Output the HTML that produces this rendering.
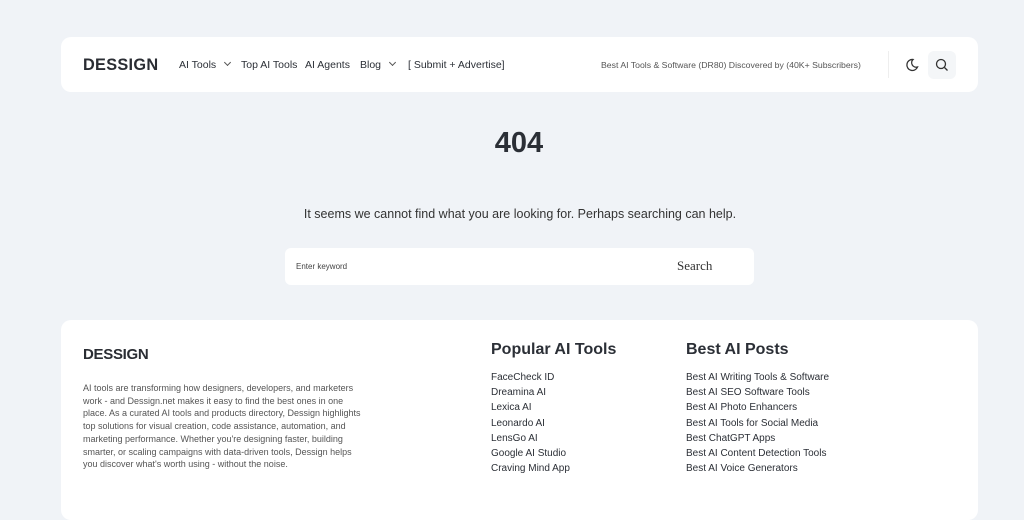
<!DOCTYPE html>
<html><head><meta charset="utf-8"><style>
*{margin:0;padding:0;box-sizing:border-box}
body{width:1024px;height:480px;overflow:hidden;background:#f0f3f7;font-family:"Liberation Sans",sans-serif;color:#2b2f36;position:relative}
.hdr{position:absolute;left:61px;top:37px;width:917px;height:55px;background:#fff;border-radius:10px}
.logo{position:absolute;left:22px;top:19px;font-weight:bold;font-size:16.3px;letter-spacing:.3px;color:#2a2d33}
.nav{position:absolute;top:22px;font-size:10.5px;color:#2b2f36}
.chev{display:inline-block;width:5px;height:5px;border-right:1.3px solid #555;border-bottom:1.3px solid #555;transform:rotate(45deg);margin-left:9px;position:relative;top:-3px}
.tag{position:absolute;left:540px;top:23px;font-size:8.7px;color:#555}
.sep{position:absolute;left:827px;top:14px;width:1px;height:27px;background:#eee}
.sbtn{position:absolute;left:867px;top:14px;width:28px;height:28px;background:#f4f6f8;border-radius:6px}
h1{position:absolute;top:127px;width:1038px;left:0;text-align:center;font-size:29px;font-weight:bold;color:#2b2f36}
.msg{position:absolute;top:207px;width:1040px;left:0;text-align:center;font-size:12.5px;color:#333}
.search{position:absolute;left:285px;top:248px;width:469px;height:37px;background:#fff;border-radius:6px}
.search .ph{position:absolute;left:11px;top:14px;font-size:8px;color:#444}
.search .b{position:absolute;left:392px;top:10px;font-family:"Liberation Serif",serif;font-size:13px;color:#333}
.foot{position:absolute;left:61px;top:320px;width:917px;height:200px;background:#fff;border-radius:10px}
.flogo{position:absolute;left:22px;top:26px;font-weight:bold;font-size:15px;letter-spacing:-.3px;color:#2a2d33}
.about{position:absolute;left:22px;top:62px;width:280px;font-size:9px;line-height:12.7px;color:#555}
.col{position:absolute;top:21px}
.col h3{font-size:16px;font-weight:bold;color:#2b2f36;margin-bottom:11px}
.col div{font-size:10px;line-height:15.2px;color:#2b2f36}
</style></head><body>
<div class="hdr">
<div class="logo">DESSIGN</div>
<div class="nav" style="left:118px">AI Tools<span class="chev"></span></div>
<div class="nav" style="left:180px">Top AI Tools</div>
<div class="nav" style="left:244px">AI Agents</div>
<div class="nav" style="left:299px">Blog<span class="chev"></span></div>
<div class="nav" style="left:347px">[ Submit + Advertise]</div>
<div class="tag">Best AI Tools &amp; Software (DR80) Discovered by (40K+ Subscribers)</div>
<div class="sep"></div>
<svg style="position:absolute;left:844px;top:21px" width="14" height="14" viewBox="0 0 14 14"><path d="M8 1.5A5.5 5.5 0 1 0 12.5 9 4.5 4.5 0 0 1 8 1.5z" fill="none" stroke="#333" stroke-width="1.3"/></svg>
<div class="sbtn"><svg style="position:absolute;left:7px;top:7px" width="14" height="14" viewBox="0 0 14 14"><circle cx="6" cy="6" r="4.5" fill="none" stroke="#333" stroke-width="1.3"/><path d="M9.5 9.5L12.5 12.5" stroke="#333" stroke-width="1.3"/></svg></div>
</div>
<h1>404</h1>
<div class="msg">It seems we cannot find what you are looking for. Perhaps searching can help.</div>
<div class="search"><span class="ph">Enter keyword</span><span class="b">Search</span></div>
<div class="foot">
<div class="flogo">DESSIGN</div>
<div class="about">AI tools are transforming how designers, developers, and marketers work - and Dessign.net makes it easy to find the best ones in one place. As a curated AI tools and products directory, Dessign highlights top solutions for visual creation, code assistance, automation, and marketing performance. Whether you're designing faster, building smarter, or scaling campaigns with data-driven tools, Dessign helps you discover what's worth using - without the noise.</div>
<div class="col" style="left:430px"><h3>Popular AI Tools</h3><div>FaceCheck ID</div><div>Dreamina AI</div><div>Lexica AI</div><div>Leonardo AI</div><div>LensGo AI</div><div>Google AI Studio</div><div>Craving Mind App</div></div>
<div class="col" style="left:625px"><h3>Best AI Posts</h3><div>Best AI Writing Tools &amp; Software</div><div>Best AI SEO Software Tools</div><div>Best AI Photo Enhancers</div><div>Best AI Tools for Social Media</div><div>Best ChatGPT Apps</div><div>Best AI Content Detection Tools</div><div>Best AI Voice Generators</div></div>
</div>
</body></html>
